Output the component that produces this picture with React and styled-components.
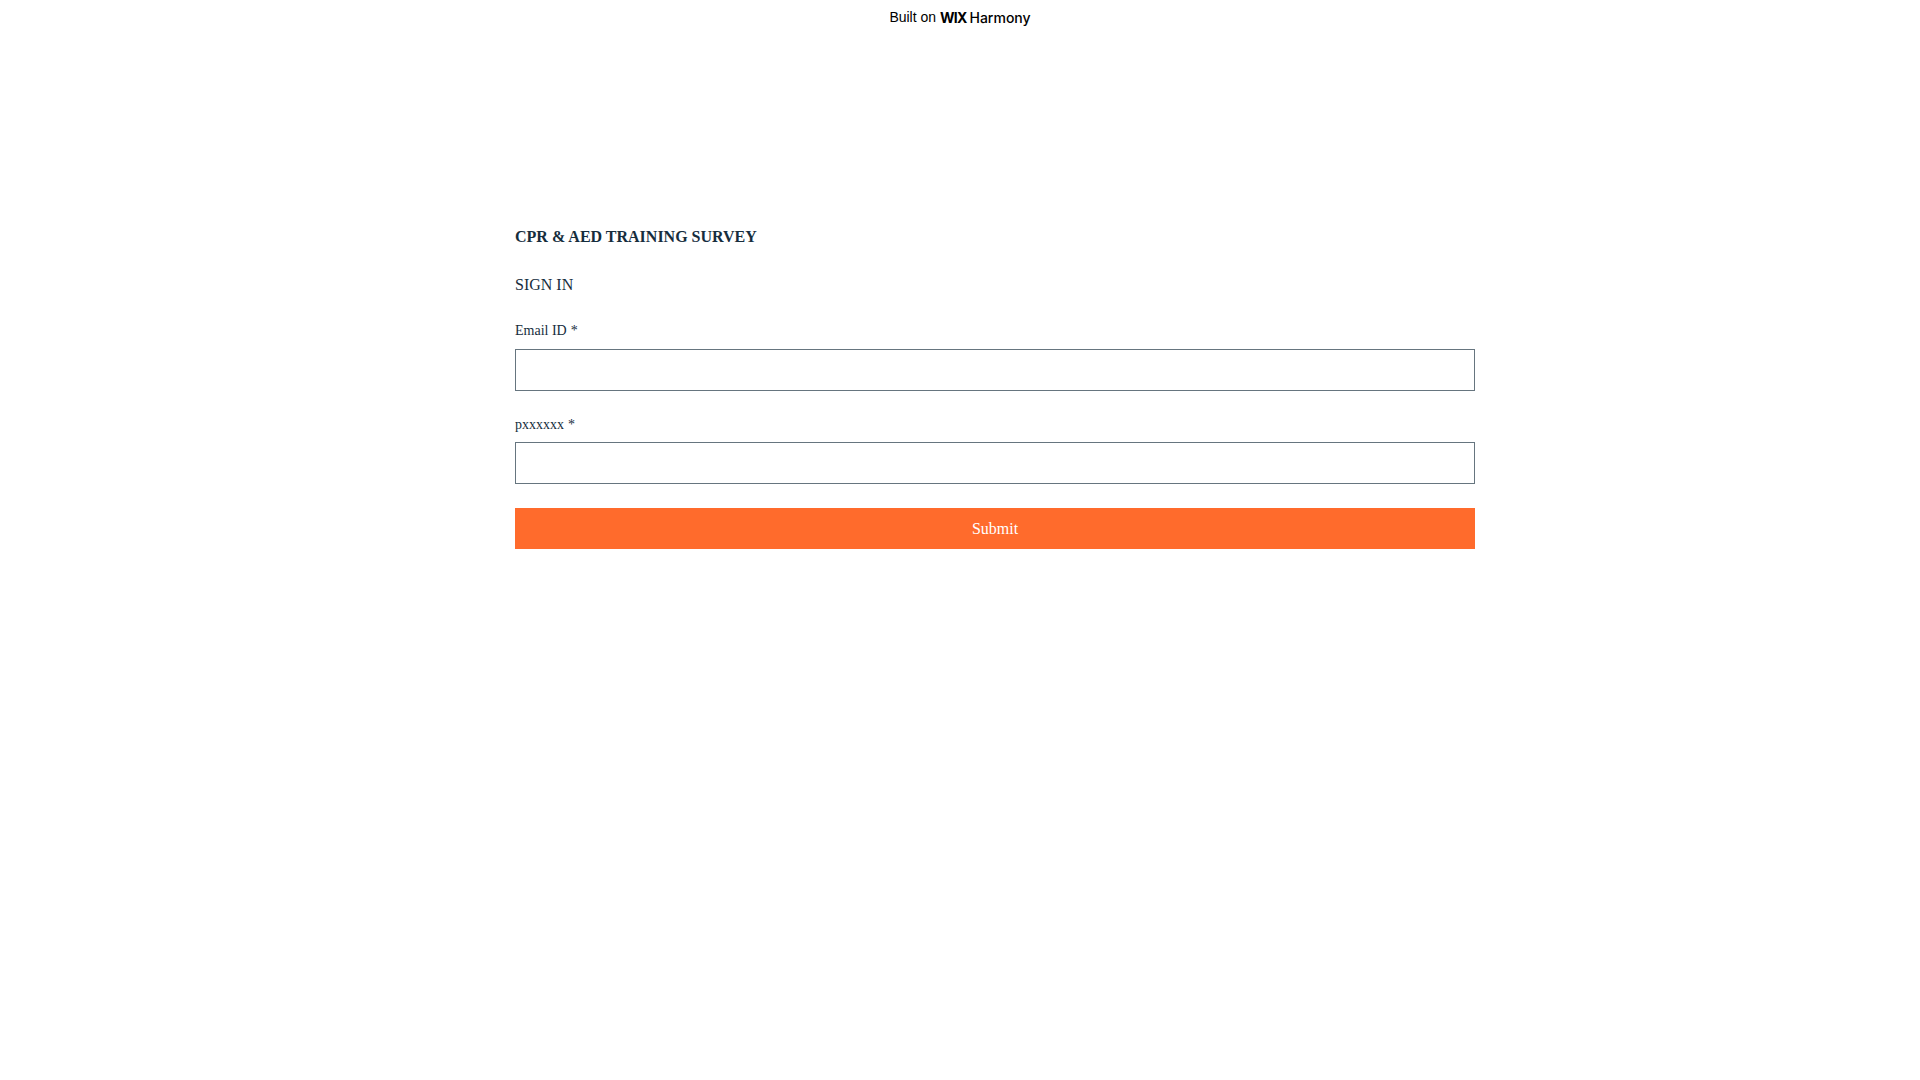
import styled, { createGlobalStyle } from 'styled-components';

const GlobalStyle = createGlobalStyle`
  html, body {
    margin: 0;
    padding: 0;
    background: #ffffff;
  }
`;

const Page = styled.div`
  min-height: 1080px;
  display: flex;
  flex-direction: column;
  align-items: center;
`;

const BuiltOn = styled.a`
  height: 34px;
  display: flex;
  align-items: center;
  gap: 4px;
  font-family: "Liberation Sans", Arial, sans-serif;
  font-size: 14px;
  color: #000000;
  text-decoration: none;
`;

const Logo = styled.span`
  display: flex;
  align-items: baseline;
  gap: 3px;
  font-family: Inter, "Liberation Sans", sans-serif;
  font-size: 14px;
  color: #000000;
`;

const LogoMark = styled.span`
  font-weight: 700;
  letter-spacing: -0.8px;
`;

const LogoName = styled.span`
  font-weight: 500;
  letter-spacing: 0;
`;

const Form = styled.form`
  align-self: flex-start;
  width: 960px;
  margin-left: 515px;
  padding-top: 193px;
  display: flex;
  flex-direction: column;
  font-family: "Liberation Serif", "Times New Roman", serif;
  color: #162d3d;
`;

const Title = styled.h1`
  margin: 0;
  font-size: 16px;
  line-height: 20px;
  font-weight: 700;
`;

const SubTitle = styled.h2`
  margin: 28px 0 0;
  font-size: 16px;
  line-height: 20px;
  font-weight: 400;
`;

const Field = styled.div`
  margin-top: ${(props) => props.$top}px;
  display: flex;
  flex-direction: column;
`;

const Label = styled.label`
  font-size: 14px;
  line-height: 18px;
  margin-bottom: ${(props) => props.$gap}px;
`;

const Required = styled.span`
  margin-left: 0.5px;
`;

const Input = styled.input`
  box-sizing: border-box;
  width: 100%;
  height: 42px;
  margin: 0;
  padding: 3px 12px;
  background: #ffffff;
  border: 1px solid #66757f;
  border-radius: 0;
  outline: none;
`;

const SubmitButton = styled.button`
  margin-top: 24px;
  width: 100%;
  height: 41px;
  padding: 0;
  border: none;
  border-radius: 0;
  background: #ff6b2c;
  color: #ffffff;
  font-family: inherit;
  font-size: 16px;
`;

const App = () => {
  return (
    <Page>
      <GlobalStyle />
      <BuiltOn href="#">
        Built on
        <Logo>
          <LogoMark>WIX</LogoMark>
          <LogoName>Harmony</LogoName>
        </Logo>
      </BuiltOn>
      <Form onSubmit={(e) => e.preventDefault()}>
        <Title>CPR &amp; AED TRAINING SURVEY</Title>
        <SubTitle>SIGN IN</SubTitle>
        <Field $top={27}>
          <Label htmlFor="email" $gap={9}>
            Email ID <Required>*</Required>
          </Label>
          <Input id="email" type="email" />
        </Field>
        <Field $top={25}>
          <Label htmlFor="password" $gap={8}>
            pxxxxxx <Required>*</Required>
          </Label>
          <Input id="password" type="password" />
        </Field>
        <SubmitButton type="submit">Submit</SubmitButton>
      </Form>
    </Page>
  );
};

export default App;
